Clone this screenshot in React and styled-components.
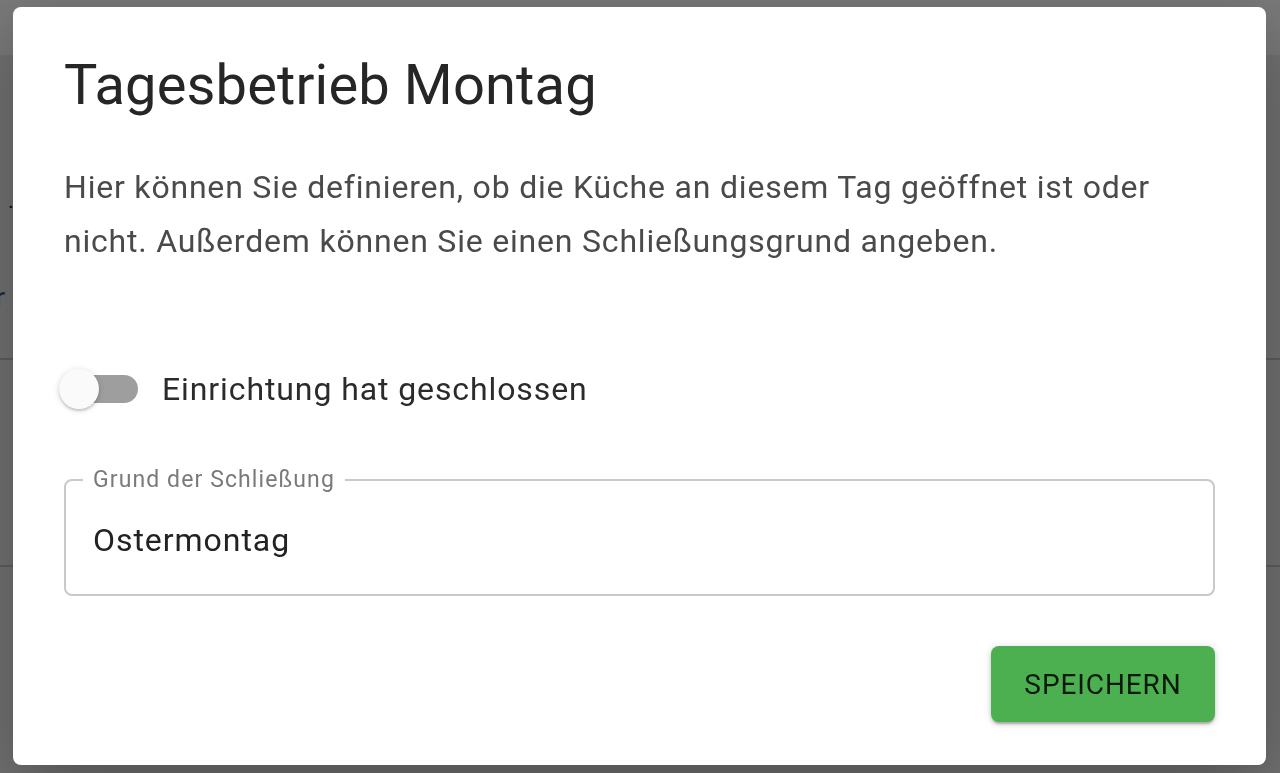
import React, { useState } from 'react';
import styled, { createGlobalStyle } from 'styled-components';

const GlobalStyle = createGlobalStyle`
  html, body {
    margin: 0;
    padding: 0;
    width: 100%;
    height: 100%;
    overflow: hidden;
    font-family: Roboto, "Liberation Sans", Arial, sans-serif;
  }
  #root {
    height: 100%;
  }
`;

// page behind the modal
const Page = styled.div`
  height: 773px;
  background: #727272;
  display: flex;
  flex-direction: column;
`;

const TopBar = styled.div`
  height: 55px;
  background: #7a7a7a;
`;

const Section = styled.div`
  height: ${(p) => p.h}px;
  border-bottom: ${(p) => (p.line ? '2px solid #5e5e5e' : 'none')};
  box-sizing: border-box;
  position: relative;
`;

const Fragment = styled.span`
  position: absolute;
  left: ${(p) => p.x}px;
  top: ${(p) => p.y}px;
  font-size: ${(p) => p.size}px;
  color: ${(p) => p.color};
  line-height: 1;
`;

const Overlay = styled.div`
  position: fixed;
  inset: 0;
  display: flex;
  align-items: flex-start;
  padding: 7px 0 0 13px;
`;

const Dialog = styled.div`
  width: 1253px;
  height: 758px;
  box-sizing: border-box;
  background: #fff;
  border-radius: 8px;
  box-shadow: 0 22px 70px rgba(0, 0, 0, 0.3);
  padding: 45px 51px 43px 51px;
  display: flex;
  flex-direction: column;
`;

const Title = styled.h2`
  margin: 0;
  font-size: 56px;
  font-weight: 400;
  line-height: 67px;
  color: #262626;
  letter-spacing: 0.15px;
`;

const Text = styled.p`
  margin: 41px 0 0 0;
  font-size: 32px;
  line-height: 54px;
  color: #4a4a4a;
  letter-spacing: 0.8px;
`;

const SwitchRow = styled.label`
  margin-top: 83px;
  height: 76px;
  display: flex;
  align-items: center;
  cursor: pointer;
`;

const SwitchBox = styled.span`
  position: relative;
  width: 98px;
  height: 76px;
  flex: 0 0 auto;
  display: flex;
  align-items: center;
`;

const Track = styled.span`
  margin-left: 6px;
  width: 68px;
  height: 28px;
  border-radius: 14px;
  background: ${(p) => (p.on ? '#a5d6a7' : '#9e9e9e')};
`;

const Thumb = styled.span`
  position: absolute;
  top: 18px;
  left: ${(p) => (p.on ? 34 : -5)}px;
  width: 40px;
  height: 40px;
  border-radius: 50%;
  background: ${(p) => (p.on ? '#4caf50' : '#fafafa')};
  box-shadow: 0 2px 2px rgba(0, 0, 0, 0.14), 0 1px 6px rgba(0, 0, 0, 0.16);
`;

const SwitchLabel = styled.span`
  font-size: 32px;
  color: #2b2b2b;
  letter-spacing: 0.9px;
`;

const Field = styled.fieldset`
  margin: 41px 0 0 0;
  padding: 0 0 36px 17px;
  border: 2px solid #c9c9c9;
  border-radius: 8px;
  min-width: 0;
`;

const Legend = styled.legend`
  padding: 0 10px;
  font-size: 23px;
  line-height: 24px;
  color: #7a7a7a;
  letter-spacing: 1.1px;
`;

const Input = styled.input`
  display: block;
  margin-top: 30px;
  width: calc(100% - 20px);
  height: 36px;
  padding: 0 0 0 10px;
  border: none;
  outline: none;
  background: transparent;
  font-family: inherit;
  font-size: 32px;
  line-height: 36px;
  color: #222;
  letter-spacing: 0.95px;
`;

const Actions = styled.div`
  margin-top: 50px;
  display: flex;
  justify-content: flex-end;
`;

const SaveButton = styled.button`
  width: 224px;
  height: 76px;
  border: none;
  border-radius: 8px;
  background: #4caf50;
  color: rgba(0, 0, 0, 0.85);
  font-family: inherit;
  font-size: 28px;
  font-weight: 400;
  letter-spacing: 0.9px;
  text-transform: uppercase;
  box-shadow: 0 3px 2px -1px rgba(0, 0, 0, 0.2), 0 2px 4px rgba(0, 0, 0, 0.14),
    0 1px 10px rgba(0, 0, 0, 0.12);
  cursor: pointer;
`;

export default function App() {
  const [closed, setClosed] = useState(false);
  const [reason, setReason] = useState('Ostermontag');

  return (
    <>
      <GlobalStyle />
      <Page>
        <TopBar />
        <Section h={305} line>
          <Fragment x={8} y={135} size={22} color="#111">.</Fragment>
          <Fragment x={-5} y={228} size={30} color="#1f2d44">r</Fragment>
        </Section>
        <Section h={207} line />
        <Section h={206} />
      </Page>
      <Overlay>
        <Dialog role="dialog">
          <Title>Tagesbetrieb Montag</Title>
          <Text>
            Hier können Sie definieren, ob die Küche an diesem Tag geöffnet ist oder
            nicht. Außerdem können Sie einen Schließungsgrund angeben.
          </Text>
          <SwitchRow onClick={() => setClosed(!closed)}>
            <SwitchBox>
              <Track on={closed ? 1 : 0} />
              <Thumb on={closed ? 1 : 0} />
            </SwitchBox>
            <SwitchLabel>Einrichtung hat geschlossen</SwitchLabel>
          </SwitchRow>
          <Field>
            <Legend>Grund der Schließung</Legend>
            <Input value={reason} onChange={(e) => setReason(e.target.value)} />
          </Field>
          <Actions>
            <SaveButton>Speichern</SaveButton>
          </Actions>
        </Dialog>
      </Overlay>
    </>
  );
}
